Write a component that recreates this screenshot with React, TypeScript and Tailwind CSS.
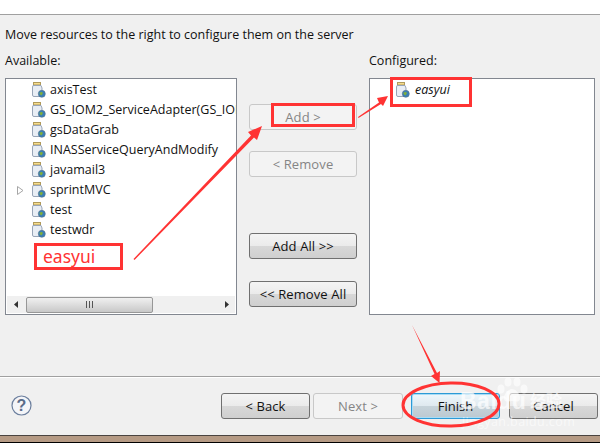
const available = [
  'axisTest',
  'GS_IOM2_ServiceAdapter(GS_IOM2_Service)',
  'gsDataGrab',
  'INASServiceQueryAndModify',
  'javamail3',
  'sprintMVC',
  'test',
  'testwdr',
]

function ProjectIcon() {
  return (
    <svg width="15" height="16" viewBox="0 0 15 16" className="shrink-0">
      <rect x="2.500" y="0.500" width="7" height="2.500" fill="#f5dc8c" stroke="#b09a5c" />
      <path d="M2 3.500h8l1 2.500v7a1.500 1.500 0 0 1-1.500 1.500H3a1.500 1.500 0 0 1-1.500-1.500V5z" fill="#e9eef5" stroke="#98a5b8" />
      <circle cx="10.800" cy="11.800" r="3.500" fill="#3a7fb5" stroke="#56708a" strokeWidth="0.600" />
      <path d="M8.500 10.800c1.300-1.300 2.800-.9 3.300 0s-1 1.300-1 2.500c-1.300.2-2.300-1.200-2.300-2.500z" fill="#7fae3c" />
    </svg>
  )
}

function WizardButton({ label, disabled, width = 'w-full' }: { label: string; disabled?: boolean; width?: string }) {
  return (
    <div
      className={`${width} h-[26px] pt-px flex items-center justify-center rounded-[3px] border text-[13px] tracking-[0.1px] ${
        disabled
          ? 'border-[#c8c8c8] bg-[#f3f3f3] text-[#858585]'
          : 'border-[#707070] bg-[linear-gradient(#f4f4f4_0%,#ebebeb_48%,#d8d8d8_50%,#cfcfcf_100%)] text-[#111111]'
      }`}
    >
      {label}
    </div>
  )
}

export default function App() {
  return (
    <div className="relative w-[600px] h-[443px] overflow-hidden flex flex-col bg-[#f0f0f0] font-['Open_Sans',sans-serif] text-[12.5px] text-[#111111]">
      {/* Header strip */}
      <div className="h-[15px] shrink-0 bg-white border-b border-[#a0a0a0]" />

      {/* Wizard body */}
      <div className="h-[361px] shrink-0 px-[5px] flex flex-col">
        <p className="h-[19px] mt-[10px] leading-[19px]">Move resources to the right to configure them on the server</p>
        <div className="mt-[7px] flex">
          <div className="w-[232px] flex flex-col">
            <div className="h-[19px] leading-[19px]">Available:</div>
            <div className="mt-[8px] h-[237px] border border-[#828790] bg-white flex flex-col">
              <ul className="flex-1 pt-px overflow-hidden">
                {available.map((name) => (
                  <li key={name} className="h-[20px] flex items-center whitespace-nowrap">
                    <span className="w-[11px] ml-[11px] shrink-0 flex justify-start">
                      {name === 'sprintMVC' && (
                        <svg width="7" height="9" viewBox="0 0 7 9">
                          <path d="M0.500 0.500L6 4.500L0.500 8.500z" fill="#fff" stroke="#a6a6a6" />
                        </svg>
                      )}
                    </span>
                    <span className="ml-[3px] shrink-0">
                      <ProjectIcon />
                    </span>
                    <span className="ml-[4px] shrink-0">{name}</span>
                  </li>
                ))}
              </ul>
              {/* Horizontal scrollbar */}
              <div className="h-[17px] mx-px mb-px flex items-center bg-[#f0f0f0]">
                <span className="w-[19px] flex justify-center">
                  <svg width="5" height="7" viewBox="0 0 5 7"><path d="M4 0v7L0 3.500z" fill="#333" /></svg>
                </span>
                <div className="w-[127px] h-[16px] flex items-center justify-center rounded-[2px] border border-[#979797] bg-[linear-gradient(#f0f0f0,#c8c8c8)]">
                  <div className="w-[7px] h-[7px] border-x border-[#555] flex justify-center">
                    <div className="w-px h-full bg-[#555]" />
                  </div>
                </div>
                <span className="flex-1 flex justify-end pr-[6px]">
                  <svg width="5" height="7" viewBox="0 0 5 7"><path d="M1 0v7l4-3.500z" fill="#333" /></svg>
                </span>
              </div>
            </div>
          </div>

          <div className="w-[108px] ml-[12px] pt-[53px] flex flex-col">
            <WizardButton label="Add >" disabled />
            <div className="mt-[21px]"><WizardButton label="< Remove" disabled /></div>
            <div className="mt-[56px]"><WizardButton label="Add All >>" /></div>
            <div className="mt-[22px]"><WizardButton label="<< Remove All" /></div>
          </div>

          <div className="w-[226px] ml-[12px] flex flex-col">
            <div className="h-[19px] leading-[19px]">Configured:</div>
            <div className="mt-[8px] h-[237px] border border-[#828790] bg-white pt-px">
              <div className="h-[20px] flex items-center pl-[25px]">
                <ProjectIcon />
                <span className="ml-[5px] italic">easyui</span>
              </div>
            </div>
          </div>
        </div>
      </div>

      {/* Footer */}
      <div className="h-[59px] shrink-0 border-t border-[#a0a0a0] shadow-[inset_0_1px_0_#ffffff] pl-[11px] pr-[2px] flex items-center justify-between">
        <svg width="21" height="21" viewBox="0 0 21 21" className="mt-[-1px]">
          <circle cx="10.500" cy="10.500" r="9.500" fill="#f4f5f8" stroke="#6c7f9e" strokeWidth="1.200" />
          <text x="10.500" y="16" textAnchor="middle" fontSize="16" fontWeight="700" fill="#5a6c8a" fontFamily="Liberation Sans">?</text>
        </svg>
        <div className="flex items-center">
          <WizardButton label="< Back" width="w-[89px]" />
          <div className="ml-[3px]"><WizardButton label="Next >" disabled width="w-[90px]" /></div>
          <div className="ml-[8px] w-[89px] h-[26px] pt-px flex items-center justify-center rounded-[3px] border border-[#2c9ad6] shadow-[inset_0_0_0_1px_#a9dcf5] bg-[linear-gradient(#eef7fc_0%,#dfe9ef_48%,#c6d3da_52%,#bcc9d1_100%)] text-[13px] text-[#111111]">Finish</div>
          <div className="ml-[9px]"><WizardButton label="Cancel" width="w-[89px]" /></div>
        </div>
      </div>

      {/* Window bottom edge */}
      <div className="flex-1 border-t border-[#4a4440] border-b border-b-black bg-[#b59a84]" />

      {/* Baidu watermark */}
      <svg width="36" height="26" viewBox="0 0 36 26" className="absolute left-[494px] top-[376px]">
        <g fill="#ffffff" fillOpacity="0.6">
          <ellipse cx="7" cy="13" rx="3.500" ry="4.500" />
          <ellipse cx="14" cy="6" rx="3.500" ry="4.500" />
          <ellipse cx="23" cy="6" rx="3.500" ry="4.500" />
          <ellipse cx="30" cy="13" rx="3.500" ry="4.500" />
          <path d="M18 13c4 0 9 6 8 10s-5 2-8 2-7 2-8-2 4-10 8-10z" />
        </g>
      </svg>
      <div className="absolute left-[460px] top-[390px] text-[23px] font-bold leading-none tracking-[0.5px] text-white/70 font-['Liberation_Sans',sans-serif]">Baidu</div>
      <div className="absolute left-[530px] top-[392px] text-[16px] font-bold leading-none text-white/70 font-['Noto_Sans_CJK_SC',sans-serif]">经验</div>
      <div className="absolute left-[462px] top-[416px] text-[12.5px] leading-none tracking-[0.4px] text-white/60">jingyan.baidu.com</div>

      {/* Red annotations */}
      <div className="absolute left-[34px] top-[243px] w-[89px] h-[27px] border-[3px] border-[#ff3333] bg-white flex items-center pl-[6px] text-[17.5px] leading-none text-[#ff3333] font-['Noto_Sans',sans-serif]">easyui</div>
      <div className="absolute left-[271px] top-[103px] w-[84px] h-[24px] border-[3px] border-[#ff3333]" />
      <div className="absolute left-[390px] top-[77px] w-[82px] h-[30px] border-[3px] border-[#ff3333]" />
      <svg width="600" height="443" viewBox="0 0 600 443" className="absolute left-0 top-0 pointer-events-none">
        <g fill="#ff3333">
          {/* tapered arrows */}
          <path d="M133.500 259L251 135.500L248 132L262 126L257 140L254 137.500L134.500 260z" />
          <path d="M358 117L379 102.500L377 98L388 96L383 106L381 104L358.500 118z" />
          <path d="M412 325L434.500 374L431 376L439.500 383L440 371L437 373z" />
        </g>
        <ellipse cx="451" cy="404.500" rx="48" ry="21.500" stroke="#ff3333" fill="none" strokeWidth="3" transform="rotate(-1 451 404.500)" />
      </svg>
    </div>
  )
}
